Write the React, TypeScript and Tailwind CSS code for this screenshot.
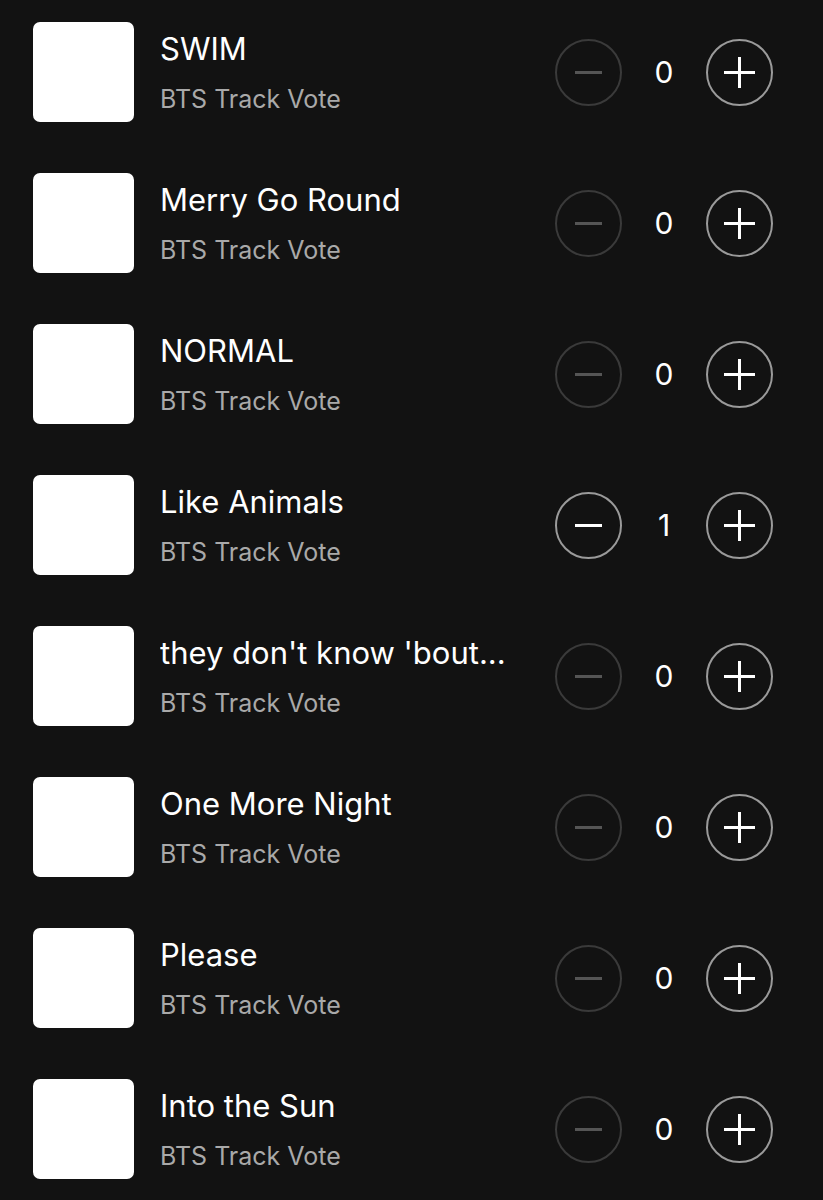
import React, { useState } from 'react';

const tracks = [
  'SWIM',
  'Merry Go Round',
  'NORMAL',
  'Like Animals',
  "they don't know 'bout...",
  'One More Night',
  'Please',
  'Into the Sun',
];

const TrackRow = ({ title, count, onAdd, onRemove }: { title: string; count: number; onAdd: () => void; onRemove: () => void }) => {
  const canRemove = count > 0;
  return (
    <div className="flex items-center h-[100px]">
      <div className="w-[101px] h-[100px] shrink-0 rounded-[7px] bg-white" />
      <div className="flex-1 min-w-0 ml-[26px] mr-[30px] flex flex-col">
        <span className="truncate text-white text-[31px] leading-[40px]">{title}</span>
        <span className="text-[#a9a9a9] text-[25px] leading-[32px] mt-[14px]">BTS Track Vote</span>
      </div>
      <div className="flex items-center shrink-0 mr-[50px]">
        <button
          onClick={onRemove}
          className={`w-[67px] h-[67px] rounded-full border-2 flex items-center justify-center ${
            canRemove ? 'border-[#9a9a9a]' : 'border-[#3a3a3a]'
          }`}
        >
          <span className={`block w-[27px] h-[3px] ${canRemove ? 'bg-white' : 'bg-[#555555]'}`} />
        </button>
        <span className="w-[84px] text-center text-white text-[30px]">{count}</span>
        <button
          onClick={onAdd}
          className="w-[67px] h-[67px] rounded-full border-2 border-[#9a9a9a] flex items-center justify-center relative"
        >
          <span className="block w-[31px] h-[3px] bg-white" />
          <span className="absolute block w-[3px] h-[31px] bg-white" />
        </button>
      </div>
    </div>
  );
};

const App = () => {
  const [votes, setVotes] = useState<number[]>([0, 0, 0, 1, 0, 0, 0, 0]);

  const change = (i: number, d: number) => {
    setVotes(v => v.map((n, j) => (j === i ? Math.max(0, n + d) : n)));
  };

  return (
    <div className="min-h-screen bg-[#121212] pt-[22px] pl-[33px] font-['Inter',sans-serif]">
      <div className="flex flex-col gap-[51px]">
        {tracks.map((t, i) => (
          <TrackRow key={t} title={t} count={votes[i]} onAdd={() => change(i, 1)} onRemove={() => change(i, -1)} />
        ))}
      </div>
    </div>
  );
};

export default App;
